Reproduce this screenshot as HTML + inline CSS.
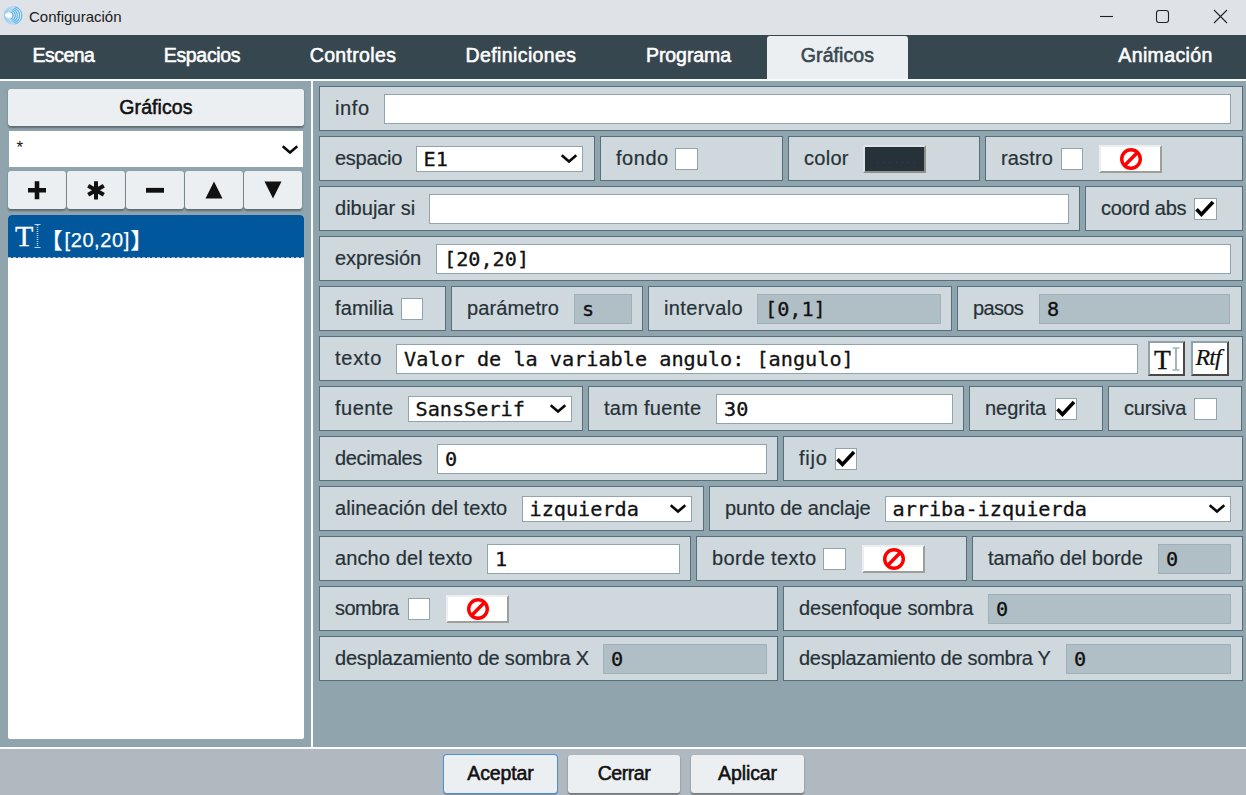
<!DOCTYPE html><html lang="es"><head><meta charset="utf-8"><title>Configuración</title><style>
*{box-sizing:border-box;margin:0;padding:0}
html,body{width:1246px;height:795px;overflow:hidden}
body{position:relative;background:#90a4ae;font-family:"Liberation Sans", sans-serif;color:#263238}
.abs{position:absolute}
#title{left:0;top:0;width:1246px;height:35px;background:#dfe2e7}
#title .tt{left:29px;top:8px;font-size:15px;line-height:18px;color:#1b1b1b}
#nav{left:0;top:35px;width:1246px;height:44px;background:#37474f}
#navline{left:0;top:79px;width:1246px;height:2px;background:#fafafa}
.tab{top:0;height:44px;line-height:40px;font-size:19.5px;-webkit-text-stroke:0.55px #fff;color:#fff;text-align:center;white-space:nowrap}
.tab.on{top:1px;height:44px;line-height:38px;background:#eceff1;color:#37474f;-webkit-text-stroke:0.55px #37474f;border-radius:3px 3px 0 0}
#vline{left:311px;top:81px;width:2px;height:667px;background:#fafafa}
#bottom{left:0;top:747px;width:1246px;height:48px;background:#b0b8c0;border-top:2px solid #fafafa}
.btn{background:#eceff1;border-radius:3px;box-shadow:0 1.5px 2px rgba(0,0,0,.35);text-align:center;color:#111;white-space:nowrap}
.lbtn{top:89px;left:8px;width:296px;height:37px;line-height:36px;font-size:19.5px;-webkit-text-stroke:0.55px #111}
.sbtn{top:171px;width:58px;height:38px}
.fbtn{top:755px;height:38px;line-height:36px;font-size:19.5px;-webkit-text-stroke:0.55px #111}
#lsel{left:9px;top:131px;width:294px;height:36px;background:#fff}
#list{left:8px;top:215px;width:296px;height:524px;background:#fff;border-radius:4px 4px 2px 2px;overflow:hidden}
#item{left:0;top:0;width:296px;height:43px;background:#01579b;border-bottom:1px dashed #b0bec5}
.p{height:45px;background:#cfd8dc;border:1px solid #546e7a}
.l{top:0;height:43px;line-height:43px;font-size:20px;white-space:nowrap;color:#263238;-webkit-text-stroke:0.2px #263238}
.in{top:7px;height:30px;background:#fff;border:1px solid #90a4ae;font-family:"DejaVu Sans Mono", "Liberation Mono", monospace;font-size:20.2px;line-height:28px;padding-left:7px;color:#111;white-space:pre;overflow:hidden;-webkit-text-stroke:0.3px #111}
.in.d{background:#b0bec5;border-color:#9fb0b9}
.sel{top:9px;height:26px;background:#fff;border:1px solid #90a4ae;font-family:"DejaVu Sans Mono", "Liberation Mono", monospace;font-size:20.2px;line-height:24px;padding-left:6.5px;color:#111;white-space:pre;overflow:hidden;-webkit-text-stroke:0.3px #111}
.cb{top:11px;width:22px;height:22px;background:#fff;border:1px solid #90a4ae}
.cbtn{top:8px;width:63px;height:28px;background:#fff;border:2px solid;border-color:#eceff1 #9e9e9a #9e9e9a #eceff1}
svg{position:absolute;overflow:visible}
</style></head><body>
<div id="title" class="abs">
<svg style="left:3px;top:5px" width="21" height="21" viewBox="0 0 21 21"><circle cx="10" cy="10.4" r="9.2" fill="#dcecf5"/><g fill="none" stroke="#8cc6ec" stroke-width="1.05" stroke-opacity=".6"><circle cx="10" cy="10.4" r="8.8"/><circle cx="9.1" cy="10.4" r="7.5"/><circle cx="8.2" cy="10.4" r="6.2"/><circle cx="7.4" cy="10.4" r="4.9"/><circle cx="6.6" cy="10.4" r="3.6"/></g><path d="M12.2 1.8816A8.8 8.8 0 0 1 12.2 18.9184M10.975 3.14A7.5 7.5 0 0 1 10.975 17.66M9.75 4.3984A6.2 6.2 0 0 1 9.75 16.4016M8.625 5.6568A4.9 4.9 0 0 1 8.625 15.1432M7.5 6.9152A3.6 3.6 0 0 1 7.5 13.8848" fill="none" stroke="#63b4ea" stroke-width="1.05"/><ellipse cx="5.4" cy="10.2" rx="3.3" ry="2.5" fill="#fff"/></svg>
<div class="abs tt">Configuración</div>
<svg style="left:1095px;top:5px" width="140" height="24" viewBox="0 0 140 24" fill="none" stroke="#222" stroke-width="1.1"><path d="M5 11.5H18"/><rect x="61.5" y="5.5" width="12" height="12" rx="2.5"/><path d="M119 5L132 18M132 5L119 18"/></svg>
</div>
<div id="nav" class="abs">
<div class="abs tab" style="left:-6.5px;width:140px;letter-spacing:-0.54px">Escena</div>
<div class="abs tab" style="left:132px;width:140px;letter-spacing:-0.33px">Espacios</div>
<div class="abs tab" style="left:283px;width:140px;letter-spacing:0.34px">Controles</div>
<div class="abs tab" style="left:451px;width:140px;letter-spacing:0.39px">Definiciones</div>
<div class="abs tab" style="left:618.5px;width:140px;letter-spacing:-0.09px">Programa</div>
<div class="abs tab on" style="left:767px;width:141px;letter-spacing:0.09px">Gráficos</div>
<div class="abs tab" style="left:1095.5px;width:140px;letter-spacing:0.38px">Animación</div>
</div><div id="navline" class="abs"></div><div id="vline" class="abs"></div>
<div class="abs btn lbtn" style="letter-spacing:0.09px">Gráficos</div>
<div id="lsel" class="abs"><div class="abs" style="left:7.5px;top:7px;font-size:17px;line-height:20px;color:#111">*</div>
<svg style="left:272.3px;top:14px" width="18" height="10" viewBox="0 0 18 10"><path d="M1.7 1.3L9 7.5L16.3 1.3" fill="none" stroke="#0a0a0a" stroke-width="2.5"/></svg></div>
<div class="abs btn sbtn" style="left:8px"><svg style="left:0;top:0" width="58" height="37" viewBox="0 0 58 37"><path d="M29 10.3V28.3M20 19.3H38" stroke="#111" stroke-width="4.6" fill="none"/></svg></div>
<div class="abs btn sbtn" style="left:67px"><svg style="left:0;top:0" width="58" height="37" viewBox="0 0 58 37"><path d="M29 10.2V28.4M21.2 14.8L36.8 23.8M36.8 14.8L21.2 23.8" stroke="#111" stroke-width="4" fill="none"/></svg></div>
<div class="abs btn sbtn" style="left:126px"><svg style="left:0;top:0" width="58" height="37" viewBox="0 0 58 37"><path d="M20 19.3H38" stroke="#111" stroke-width="4.8" fill="none"/></svg></div>
<div class="abs btn sbtn" style="left:185px"><svg style="left:0;top:0" width="58" height="37" viewBox="0 0 58 37"><path d="M29 10.5L37.5 27.5H20.5Z" fill="#111"/></svg></div>
<div class="abs btn sbtn" style="left:244px"><svg style="left:0;top:0" width="58" height="37" viewBox="0 0 58 37"><path d="M29 27.5L37.5 10.5H20.5Z" fill="#111"/></svg></div>
<div id="list" class="abs"><div id="item" class="abs">
<div class="abs" style="left:7px;top:5px;font-family:'Liberation Serif',serif;font-size:30px;line-height:32px;color:#fff;-webkit-text-stroke:0.3px #fff">T</div>
<svg style="left:26px;top:9px" width="7" height="24" viewBox="0 0 7 24"><path d="M0.5 0.5H6.5M0.5 23.5H6.5" stroke="#b9d6ea" stroke-width="1" fill="none"/><path d="M3.5 1V23" stroke="#b9d6ea" stroke-width="1.6" fill="none" stroke-dasharray="1 1"/></svg>
<div class="abs" style="left:32.5px;top:0;line-height:50px;font-size:20px;letter-spacing:0.5px;color:#fff;-webkit-text-stroke:0.25px #fff;white-space:nowrap;font-family:&quot;Liberation Sans&quot;,&quot;Noto Sans CJK SC&quot;,sans-serif"><span style="font-size:22px;letter-spacing:0;position:relative;top:0.5px">【</span><span style="margin-left:2px;letter-spacing:0.6px">[20,20]</span><span style="font-size:22px;letter-spacing:0;position:relative;top:0.5px;margin-left:0.5px">】</span></div>
</div></div>
<div class="abs p" style="left:319px;top:86px;width:924px">
<div class="abs l" style="left:15px;letter-spacing:0.64px">info</div>
<div class="abs in" style="left:64px;width:847px"></div>
</div>
<div class="abs p" style="left:319px;top:136px;width:276px">
<div class="abs l" style="left:15px;letter-spacing:-0.28px">espacio</div>
<div class="abs sel" style="left:96px;width:167px">E1<svg style="right:4px;top:7px" width="18" height="10" viewBox="0 0 18 10"><path d="M1.7 1.3L9 7.5L16.3 1.3" fill="none" stroke="#0a0a0a" stroke-width="2.6"/></svg></div>
</div>
<div class="abs p" style="left:600px;top:136px;width:183px">
<div class="abs l" style="left:15px;letter-spacing:0.53px">fondo</div>
<div class="abs cb" style="left:74px;width:23px"></div>
</div>
<div class="abs p" style="left:788px;top:136px;width:192px">
<div class="abs l" style="left:15px;letter-spacing:0.29px">color</div>
<div class="abs" style="left:74px;top:8px;width:63px;height:28px;background:#263238;border:2px solid;border-color:#dfe3e6 #8f8f8b #8f8f8b #dfe3e6"><div class="abs" style="left:12px;top:15px;width:38px;height:1px;background:repeating-linear-gradient(90deg,#1a3cae 0 1px,transparent 1px 6.2px)"></div><div class="abs" style="left:6px;top:22px;width:1px;height:1px;background:#1a3cae"></div></div>
</div>
<div class="abs p" style="left:985px;top:136px;width:258px">
<div class="abs l" style="left:15px;letter-spacing:0.15px">rastro</div>
<div class="abs cb" style="left:75px;width:22px"></div>
<div class="abs cbtn" style="left:113px"><svg style="left:18px;top:0px" width="24" height="24" viewBox="0 0 24 24"><circle cx="12" cy="12" r="9.3" fill="none" stroke="#f00" stroke-width="3.4"/><path d="M5.6 18.4L18.4 5.6" stroke="#f00" stroke-width="3.5"/></svg></div>
</div>
<div class="abs p" style="left:319px;top:186px;width:761px">
<div class="abs l" style="left:15px;letter-spacing:0.02px">dibujar si</div>
<div class="abs in" style="left:109px;width:640px"></div>
</div>
<div class="abs p" style="left:1085px;top:186px;width:158px">
<div class="abs l" style="left:15px;letter-spacing:-0.29px">coord abs</div>
<div class="abs cb" style="left:108px;width:23px"><svg style="left:1px;top:2px" width="19" height="17" viewBox="0 0 19 17"><path d="M0.5 8.2L5.45 13.45L17 1.1" fill="none" stroke="#000" stroke-width="3.6"/></svg></div>
</div>
<div class="abs p" style="left:319px;top:236px;width:924px">
<div class="abs l" style="left:15px;letter-spacing:-0.08px">expresión</div>
<div class="abs in" style="left:116px;width:795px">[20,20]</div>
</div>
<div class="abs p" style="left:319px;top:286px;width:127px">
<div class="abs l" style="left:15px;letter-spacing:0.1px">familia</div>
<div class="abs cb" style="left:81px;width:22px"></div>
</div>
<div class="abs p" style="left:451px;top:286px;width:192px">
<div class="abs l" style="left:15px;letter-spacing:0.1px">parámetro</div>
<div class="abs in d" style="left:122px;width:58px">s</div>
</div>
<div class="abs p" style="left:648px;top:286px;width:304px">
<div class="abs l" style="left:15px;letter-spacing:0.38px">intervalo</div>
<div class="abs in d" style="left:108px;width:184px">[0,1]</div>
</div>
<div class="abs p" style="left:957px;top:286px;width:285px">
<div class="abs l" style="left:15px;letter-spacing:-0.64px">pasos</div>
<div class="abs in d" style="left:81px;width:191px">8</div>
</div>
<div class="abs p" style="left:319px;top:336px;width:924px">
<div class="abs l" style="left:15px;letter-spacing:0.73px">texto</div>
<div class="abs in" style="left:76px;width:742px">Valor de la variable angulo: [angulo]</div>
<div class="abs" style="left:828px;top:4px;width:37px;height:35px;background:#fff;border:2px solid;border-color:#8ea2ad #4e4747 #4e4747 #8ea2ad"><div class="abs" style="left:4px;top:0.5px;font-family:'Liberation Serif',serif;font-size:27.5px;line-height:32px;color:#111;-webkit-text-stroke:0.35px #111">T</div><svg style="left:22px;top:4px" width="8" height="24" viewBox="0 0 8 24"><path d="M0.5 1H7.5M0.5 23H7.5" stroke="#a3b3bd" stroke-width="1.4" fill="none"/><path d="M4 1V23" stroke="#a3b3bd" stroke-width="2" fill="none"/></svg></div>
<div class="abs" style="left:871px;top:4px;width:38px;height:35px;background:#fff;border:2px solid;border-color:#8ea2ad #4e4747 #4e4747 #8ea2ad"><div class="abs" style="left:2.5px;top:-1px;font-family:'Liberation Serif',serif;font-style:italic;font-size:24px;line-height:31px;color:#111;letter-spacing:-0.9px;-webkit-text-stroke:0.2px #111">Rtf</div></div>
</div>
<div class="abs p" style="left:319px;top:386px;width:264px">
<div class="abs l" style="left:15px;letter-spacing:0.48px">fuente</div>
<div class="abs sel" style="left:88px;width:164px">SansSerif<svg style="right:4px;top:7px" width="18" height="10" viewBox="0 0 18 10"><path d="M1.7 1.3L9 7.5L16.3 1.3" fill="none" stroke="#0a0a0a" stroke-width="2.6"/></svg></div>
</div>
<div class="abs p" style="left:588px;top:386px;width:376px">
<div class="abs l" style="left:15px;letter-spacing:0.28px">tam fuente</div>
<div class="abs in" style="left:127px;width:237px">30</div>
</div>
<div class="abs p" style="left:969px;top:386px;width:134px">
<div class="abs l" style="left:15px;letter-spacing:-0.01px">negrita</div>
<div class="abs cb" style="left:85px;width:22px"><svg style="left:1px;top:2px" width="19" height="17" viewBox="0 0 19 17"><path d="M0.5 8.2L5.45 13.45L17 1.1" fill="none" stroke="#000" stroke-width="3.6"/></svg></div>
</div>
<div class="abs p" style="left:1108px;top:386px;width:134px">
<div class="abs l" style="left:15px;letter-spacing:-0.18px">cursiva</div>
<div class="abs cb" style="left:85px;width:23px"></div>
</div>
<div class="abs p" style="left:319px;top:436px;width:459px">
<div class="abs l" style="left:15px;letter-spacing:-0.34px">decimales</div>
<div class="abs in" style="left:117px;width:330px">0</div>
</div>
<div class="abs p" style="left:783px;top:436px;width:460px">
<div class="abs l" style="left:15px;letter-spacing:0.81px">fijo</div>
<div class="abs cb" style="left:51px;width:22px"><svg style="left:1px;top:2px" width="19" height="17" viewBox="0 0 19 17"><path d="M0.5 8.2L5.45 13.45L17 1.1" fill="none" stroke="#000" stroke-width="3.6"/></svg></div>
</div>
<div class="abs p" style="left:319px;top:486px;width:385px">
<div class="abs l" style="left:15px;letter-spacing:0.05px">alineación del texto</div>
<div class="abs sel" style="left:202px;width:170px">izquierda<svg style="right:4px;top:7px" width="18" height="10" viewBox="0 0 18 10"><path d="M1.7 1.3L9 7.5L16.3 1.3" fill="none" stroke="#0a0a0a" stroke-width="2.6"/></svg></div>
</div>
<div class="abs p" style="left:709px;top:486px;width:534px">
<div class="abs l" style="left:15px;letter-spacing:-0.07px">punto de anclaje</div>
<div class="abs sel" style="left:175px;width:346px">arriba-izquierda<svg style="right:4px;top:7px" width="18" height="10" viewBox="0 0 18 10"><path d="M1.7 1.3L9 7.5L16.3 1.3" fill="none" stroke="#0a0a0a" stroke-width="2.6"/></svg></div>
</div>
<div class="abs p" style="left:319px;top:536px;width:372px">
<div class="abs l" style="left:15px;letter-spacing:0.12px">ancho del texto</div>
<div class="abs in" style="left:167px;width:193px">1</div>
</div>
<div class="abs p" style="left:696px;top:536px;width:271px">
<div class="abs l" style="left:15px;letter-spacing:0.4px">borde texto</div>
<div class="abs cb" style="left:126px;width:23px"></div>
<div class="abs cbtn" style="left:165px"><svg style="left:18px;top:0px" width="24" height="24" viewBox="0 0 24 24"><circle cx="12" cy="12" r="9.3" fill="none" stroke="#f00" stroke-width="3.4"/><path d="M5.6 18.4L18.4 5.6" stroke="#f00" stroke-width="3.5"/></svg></div>
</div>
<div class="abs p" style="left:972px;top:536px;width:271px">
<div class="abs l" style="left:15px;letter-spacing:-0.06px">tamaño del borde</div>
<div class="abs in d" style="left:185px;width:73px">0</div>
</div>
<div class="abs p" style="left:319px;top:586px;width:459px">
<div class="abs l" style="left:15px;letter-spacing:-0.5px">sombra</div>
<div class="abs cb" style="left:88px;width:22px"></div>
<div class="abs cbtn" style="left:126px"><svg style="left:18px;top:0px" width="24" height="24" viewBox="0 0 24 24"><circle cx="12" cy="12" r="9.3" fill="none" stroke="#f00" stroke-width="3.4"/><path d="M5.6 18.4L18.4 5.6" stroke="#f00" stroke-width="3.5"/></svg></div>
</div>
<div class="abs p" style="left:783px;top:586px;width:460px">
<div class="abs l" style="left:15px;letter-spacing:-0.15px">desenfoque sombra</div>
<div class="abs in d" style="left:204px;width:243px">0</div>
</div>
<div class="abs p" style="left:319px;top:636px;width:459px">
<div class="abs l" style="left:15px;letter-spacing:-0.2px">desplazamiento de sombra X</div>
<div class="abs in d" style="left:283px;width:164px">0</div>
</div>
<div class="abs p" style="left:783px;top:636px;width:460px">
<div class="abs l" style="left:15px;letter-spacing:-0.27px">desplazamiento de sombra Y</div>
<div class="abs in d" style="left:282px;width:165px">0</div>
</div>
<div id="bottom" class="abs"></div>
<div class="abs btn fbtn" style="left:444px;width:113px;letter-spacing:-0.11px;box-shadow:0 0 0 1px #4a90d9,0 1.5px 2px rgba(0,0,0,.3)">Aceptar</div>
<div class="abs btn fbtn" style="left:568px;width:112px;letter-spacing:-0.43px">Cerrar</div>
<div class="abs btn fbtn" style="left:691px;width:113px;letter-spacing:-0.12px">Aplicar</div>
</body></html>
